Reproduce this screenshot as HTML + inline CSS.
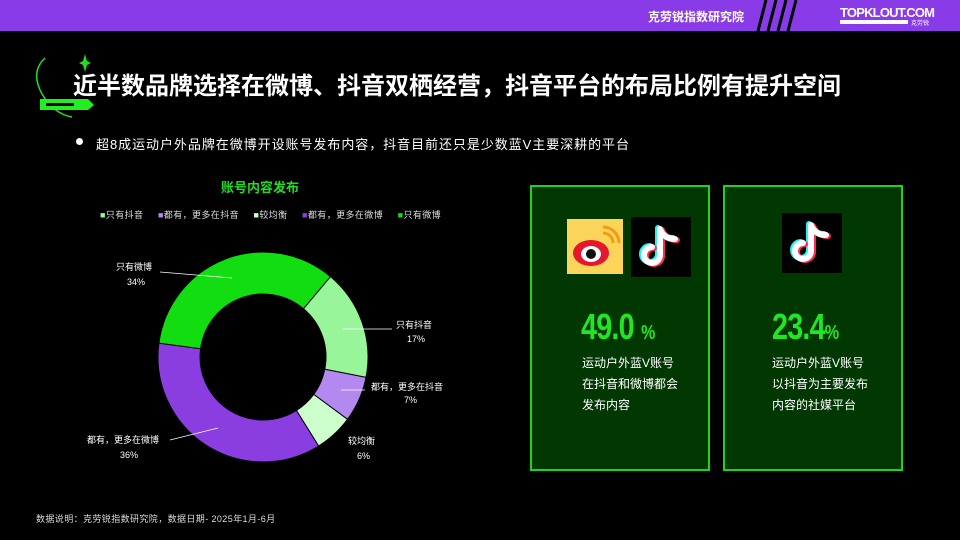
<!DOCTYPE html>
<html><head><meta charset="utf-8"><style>
*{margin:0;padding:0;box-sizing:border-box}
body{width:960px;height:540px;background:#000;position:relative;overflow:hidden;font-family:"Liberation Sans","Noto Sans CJK SC",sans-serif;color:#fff}
.bar{position:absolute;left:0;top:0;width:960px;height:31px;background:#8a3be8}
.t{position:absolute;white-space:nowrap}
.card{position:absolute;top:185px;width:180px;height:286px;border:2px solid #22d022;background:#013801}
.num{position:absolute;font-weight:bold;color:#22e622;font-size:36px;letter-spacing:-1px;transform:scaleX(0.8);transform-origin:left top}
.desc{position:absolute;font-size:12px;line-height:21px;color:#fff}
</style></head><body>
<div class="bar"></div>
<div class="t" style="left:648px;top:8px;font-size:12px;font-weight:bold">克劳锐指数研究院</div>
<svg style="position:absolute;left:740px;top:0" width="90" height="31"><g stroke="#000" stroke-width="3"><line x1="18" y1="31" x2="26" y2="0"/><line x1="28" y1="31" x2="36" y2="0"/><line x1="38" y1="31" x2="46" y2="0"/><line x1="48" y1="31" x2="56" y2="0"/></g></svg>
<div class="t" style="left:840px;top:5px;font-size:13px;font-weight:bold;letter-spacing:-0.8px">TOPKLOUT.COM</div>
<div style="position:absolute;left:840px;top:20px;width:68px;height:4px;background:#fff"></div>
<div class="t" style="left:911px;top:18px;font-size:6px">克劳锐</div>
<svg style="position:absolute;left:30px;top:50px" width="70" height="72">
<path d="M15 8 Q0 22 12 44 Q24 64 42 67" fill="none" stroke="#22dd22" stroke-width="1.5"/>
<path d="M55 4 L57 11 L61 13 L57 15 L55 22 L53 15 L49 13 L53 11Z" fill="#22dd22"/>
<path d="M10 49 H58 L64 55 L58 60 H10Z" fill="#22ee22"/><rect x="16" y="53" width="28" height="3" fill="#000"/>
</svg>
<div class="t" style="left:73px;top:66px;font-size:24px;font-weight:bold;letter-spacing:0px">近半数品牌选择在微博、抖音双栖经营，抖音平台的布局比例有提升空间</div>
<div style="position:absolute;left:76px;top:138px;width:7px;height:7px;border-radius:50%;background:#fff"></div>
<div class="t" style="left:96px;top:134px;font-size:13px;letter-spacing:0.95px">超8成运动户外品牌在微博开设账号发布内容，抖音目前还只是少数蓝V主要深耕的平台</div>
<div class="t" style="left:221px;top:177px;font-size:13px;font-weight:bold;color:#22dd22">账号内容发布</div>
<div class="t" style="left:100px;top:208px;font-size:9px;color:#ddd;letter-spacing:0.4px"><span style="color:#99f59a">■</span>只有抖音 &nbsp;&nbsp;&nbsp;&nbsp;<span style="color:#b389f0">■</span>都有，更多在抖音 &nbsp;&nbsp;&nbsp;&nbsp;<span style="color:#ccffcc">■</span>较均衡 &nbsp;&nbsp;&nbsp;&nbsp;<span style="color:#8a3ee0">■</span>都有，更多在微博 &nbsp;&nbsp;&nbsp;&nbsp;<span style="color:#11dd11">■</span>只有微博</div>
<svg style="position:absolute;left:0;top:0" width="500" height="540">
<g stroke="#000" stroke-width="1">
<path d="M330.5 276.6 A105 105 0 0 1 366 377.4 L324.8 369.2 A63 63 0 0 0 303.5 308.7Z" fill="#99f59a"/>
<path d="M366 377.4 A105 105 0 0 1 347.5 419.3 L313.7 394.4 A63 63 0 0 0 324.8 369.2Z" fill="#b389f0"/>
<path d="M347.5 419.3 A105 105 0 0 1 318.6 446 L296.4 410.4 A63 63 0 0 0 313.7 394.4Z" fill="#ccffcc"/>
<path d="M318.6 446 A105 105 0 0 1 158.9 343.1 L200.6 348.7 A63 63 0 0 0 296.4 410.4Z" fill="#8a3ee0"/>
<path d="M158.9 343.1 A105 105 0 0 1 330.5 276.6 L303.5 308.7 A63 63 0 0 0 200.6 348.7Z" fill="#11dd11"/>
</g>
<g stroke="#fff" stroke-width="0.8" fill="none">
<polyline points="160,272 232,278"/><polyline points="343,329 392,329"/><polyline points="341,390 365,390"/><polyline points="170,440 218,428"/>
</g>
<g fill="#fff" font-size="9" font-family="Liberation Sans,Noto Sans CJK SC,sans-serif">
<text x="116" y="270">只有微博</text><text x="127" y="285">34%</text>
<text x="396" y="328">只有抖音</text><text x="407" y="342">17%</text>
<text x="371" y="390">都有，更多在抖音</text><text x="404" y="403">7%</text>
<text x="348" y="444">较均衡</text><text x="357" y="459">6%</text>
<text x="87" y="443">都有，更多在微博</text><text x="120" y="458">36%</text>
</g>
</svg>
<div class="t" style="left:36px;top:512px;font-size:9px;color:#ddd;letter-spacing:0.4px">数据说明：克劳锐指数研究院，数据日期- 2025年1月-6月</div>
<div class="card" style="left:530px"></div>
<div class="card" style="left:723px"></div>
<svg style="position:absolute;left:567px;top:219px" width="56" height="55"><rect width="56" height="55" fill="#fbd45a"/><ellipse cx="24" cy="34" rx="18" ry="13" fill="#e6162d"/><ellipse cx="24" cy="35" rx="10" ry="8" fill="#fff"/><circle cx="24" cy="35" r="5" fill="#111"/><path d="M36 14 A10 10 0 0 1 46 24 M36 8 A16 16 0 0 1 52 24" stroke="#f39c12" stroke-width="3" fill="none"/></svg>
<svg style="position:absolute;left:631px;top:217px" width="60" height="60"><rect width="60" height="60" fill="#000"/><g fill="none" stroke-width="6" stroke-linecap="round"><path d="M29 12 V38 A8 8 0 1 1 21 30 M29 12 Q33 22 44 22" stroke="#25f4ee" transform="translate(-2,-1)"/><path d="M29 12 V38 A8 8 0 1 1 21 30 M29 12 Q33 22 44 22" stroke="#fe2c55" transform="translate(2,1)"/><path d="M29 12 V38 A8 8 0 1 1 21 30 M29 12 Q33 22 44 22" stroke="#fff"/></g></svg>
<svg style="position:absolute;left:782px;top:213px" width="60" height="60"><rect width="60" height="60" fill="#000"/><g fill="none" stroke-width="6" stroke-linecap="round"><path d="M29 12 V38 A8 8 0 1 1 21 30 M29 12 Q33 22 44 22" stroke="#25f4ee" transform="translate(-2,-1)"/><path d="M29 12 V38 A8 8 0 1 1 21 30 M29 12 Q33 22 44 22" stroke="#fe2c55" transform="translate(2,1)"/><path d="M29 12 V38 A8 8 0 1 1 21 30 M29 12 Q33 22 44 22" stroke="#fff"/></g></svg>
<div class="num" style="left:581px;top:306px">49.0 <span style="font-size:20px">%</span></div>
<div class="num" style="left:772px;top:306px">23.4<span style="font-size:20px">%</span></div>
<div class="desc" style="left:582px;top:353px">运动户外蓝V账号<br>在抖音和微博都会<br>发布内容</div>
<div class="desc" style="left:772px;top:353px">运动户外蓝V账号<br>以抖音为主要发布<br>内容的社媒平台</div>
</body></html>
